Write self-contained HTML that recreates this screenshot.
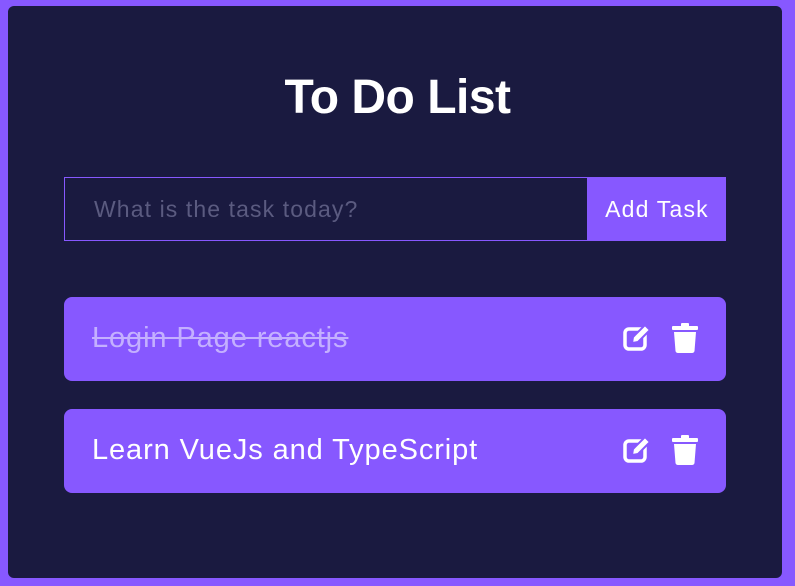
<!DOCTYPE html>
<html><head><style>
body{margin:0;width:795px;height:586px;background:#8758ff;font-family:"Liberation Sans",sans-serif;overflow:hidden}
.card{position:absolute;left:8px;top:6px;width:774px;height:572px;background:#1a1a40;border-radius:6px}
h1{position:absolute;left:0;width:795px;top:70px;margin:0;text-align:center;color:#fff;font-size:48px;font-weight:bold;line-height:56px;letter-spacing:-0.5px}
.inp{position:absolute;left:64px;top:177px;width:522px;height:62px;border:1px solid #8758ff;box-sizing:content-box}
.inp span{position:absolute;left:29px;top:18px;font-size:23px;color:#5b5b80;letter-spacing:1.1px}
.btn{position:absolute;left:588px;top:177px;width:138px;height:64px;background:#8758ff;color:#fff;font-size:23px;line-height:64px;text-align:center;letter-spacing:1.2px}
.item{position:absolute;left:64px;width:662px;height:84px;background:#8758ff;border-radius:8px}
.item .t{position:absolute;left:28px;top:25px;font-size:29px;color:#fff;letter-spacing:0.9px}
.item .t.done{color:#c4b0ff;text-decoration:line-through}
.item svg{position:absolute;top:26px}
</style></head><body>
<div class="card"></div>
<h1>To Do List</h1>
<div class="inp"><span>What is the task today?</span></div>
<div class="btn">Add Task</div>
<div class="item" style="top:297px"><div class="t done">Login Page reactjs</div>
<svg style="left:558px" width="30" height="30" viewBox="0 0 30 30"><rect x="3" y="6" width="20" height="20" rx="4" fill="none" stroke="#fff" stroke-width="3.5"/><path d="M10 20 L11 14 L23 2 L28 7 L16 19 Z" fill="#fff" stroke="#8758ff" stroke-width="2"/></svg>
<svg style="left:608px" width="26" height="30" viewBox="0 0 26 30"><rect x="0" y="3" width="26" height="4" rx="1" fill="#fff"/><rect x="9" y="0" width="8" height="4" rx="1" fill="#fff"/><path d="M2 9 H24 L22.5 28 Q22 30 20 30 H6 Q4 30 3.5 28 Z" fill="#fff"/></svg></div>
<div class="item" style="top:409px"><div class="t">Learn VueJs and TypeScript</div>
<svg style="left:558px" width="30" height="30" viewBox="0 0 30 30"><rect x="3" y="6" width="20" height="20" rx="4" fill="none" stroke="#fff" stroke-width="3.5"/><path d="M10 20 L11 14 L23 2 L28 7 L16 19 Z" fill="#fff" stroke="#8758ff" stroke-width="2"/></svg>
<svg style="left:608px" width="26" height="30" viewBox="0 0 26 30"><rect x="0" y="3" width="26" height="4" rx="1" fill="#fff"/><rect x="9" y="0" width="8" height="4" rx="1" fill="#fff"/><path d="M2 9 H24 L22.5 28 Q22 30 20 30 H6 Q4 30 3.5 28 Z" fill="#fff"/></svg></div>
</body></html>
